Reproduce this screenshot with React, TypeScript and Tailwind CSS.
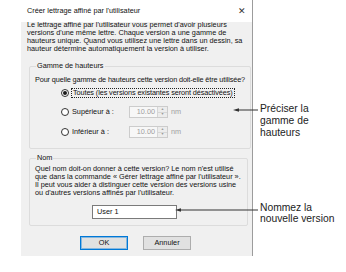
import React from "react";

function Radio({ checked }: { checked?: boolean }) {
  return (
    <span className="flex h-[8px] w-[8px] shrink-0 items-center justify-center rounded-full border border-[#333] bg-white">
      {checked && <span className="h-[4px] w-[4px] rounded-full bg-[#1a1a1a]" />}
    </span>
  );
}

function SpinBox() {
  return (
    <div className="flex items-center">
      <div className="flex h-[12px] w-[39px] border border-[#cccccc] bg-[#f7f7f7]">
        <span className="flex flex-1 items-center justify-end pr-[2px] text-[#a0a0a0]">10.00</span>
        <span className="flex w-[10px] flex-col border-l border-[#d6d6d6] bg-[#ececec]">
          <span className="flex flex-1 items-center justify-center border-b border-[#d6d6d6] text-[3.5px] leading-none text-[#9a9a9a]">▲</span>
          <span className="flex flex-1 items-center justify-center text-[3.5px] leading-none text-[#9a9a9a]">▼</span>
        </span>
      </div>
      <span className="ml-[3px] text-[#a0a0a0]">nm</span>
    </div>
  );
}

function Arrow({ x1, x2, y }: { x1: number; x2: number; y: number }) {
  return (
    <svg
      className="absolute"
      style={{ left: x1, top: y - 3, width: x2 - x1, height: 6 }}
      viewBox={`0 0 ${x2 - x1} 6`}
    >
      <line x1={3} y1={3} x2={x2 - x1} y2={3} stroke="#333" strokeWidth={1} />
      <polygon points="0,3 6,1.2 6,4.8" fill="#333" />
    </svg>
  );
}

export default function App() {
  return (
    <div className="relative h-[272px] w-[346px] whitespace-nowrap bg-white font-['Liberation_Sans',Arial,sans-serif] text-[7.3px] leading-[8px] text-[#111]">
      <div className="ml-[21px] flex h-[256px] w-[232px] flex-col border-r border-[#9c9c9c]">
        <div className="flex h-[22px] shrink-0 items-center justify-between bg-white pl-[6px] pr-[6px]">
          <span>Créer lettrage affiné par l'utilisateur</span>
          <span className="text-[9px] font-light text-[#333]">✕</span>
        </div>
        <div className="flex flex-1 flex-col bg-[#f0f0f0] pb-[6px]">
          <p className="-mt-[1px] pl-[6px]">
            Le lettrage affiné par l'utilisateur vous permet d'avoir plusieurs
            <br />
            versions d'une même lettre. Chaque version a une gamme de
            <br />
            hauteurs unique. Quand vous utilisez une lettre dans un dessin, sa
            <br />
            hauteur détermine automatiquement la version à utiliser.
          </p>

          <fieldset className="ml-[8px] mt-[9px] w-[219px] rounded-[2px] border border-[#dcdcdc] px-[5px] pb-[10px]">
            <legend className="ml-[1px] px-[1px]">Gamme de hauteurs</legend>
            <p className="mt-[6px] tracking-[-0.12px]">
              Pour quelle gamme de hauteurs cette version doit-elle être utilisée?
            </p>
            <div className="ml-[26px] mt-[3px] flex h-[12px] items-center">
              <Radio checked />
              <span className="ml-[2px] border border-dotted border-[#222] px-[1px] leading-[8px] tracking-[-0.1px]">
                Toutes (les versions existantes seront désactivées)
              </span>
            </div>
            <div className="ml-[26px] mt-[7px] flex h-[12px] items-center">
              <Radio />
              <span className="ml-[3px] w-[57px]">Supérieur à :</span>
              <SpinBox />
            </div>
            <div className="ml-[26px] mt-[8px] flex h-[12px] items-center">
              <Radio />
              <span className="ml-[3px] w-[57px]">Inférieur à :</span>
              <SpinBox />
            </div>
          </fieldset>

          <fieldset className="ml-[8px] mt-[5px] w-[219px] rounded-[2px] border border-[#dcdcdc] px-[5px] pb-[6px]">
            <legend className="ml-[1px] px-[1px]">Nom</legend>
            <p className="mt-[3px]">
              Quel nom doit-on donner à cette version? Le nom n'est utilisé
              <br />
              que dans la commande « Gérer lettrage affiné par l'utilisateur ».
              <br />
              Il peut vous aider à distinguer cette version des versions usine
              <br />
              ou d'autres versions affinés par l'utilisateur.
            </p>
            <div className="ml-[57px] mt-[8px] flex h-[14px] w-[85px] items-center border border-[#7a7a7a] bg-white pl-[4px]">
              User 1
            </div>
          </fieldset>

          <div className="ml-[59px] mt-[10px] flex gap-[15px]">
            <button className="flex h-[14px] w-[48px] items-center justify-center border border-[#0078d7] bg-[#e1e1e1] outline outline-1 -outline-offset-2 outline-[#0078d7]/40">
              OK
            </button>
            <button className="flex h-[14px] w-[48px] items-center justify-center border border-[#adadad] bg-[#e1e1e1]">
              Annuler
            </button>
          </div>
        </div>
      </div>

      <Arrow x1={233} x2={258} y={110} />
      <Arrow x1={175} x2={258} y={210} />

      <div className="absolute left-[260px] top-[103px] text-[10.3px] leading-[12px] text-[#222]">
        Préciser la
        <br />
        gamme de
        <br />
        hauteurs
      </div>
      <div className="absolute left-[260px] top-[202px] text-[10.3px] leading-[11px] text-[#222]">
        Nommez la
        <br />
        nouvelle version
      </div>
    </div>
  );
}
